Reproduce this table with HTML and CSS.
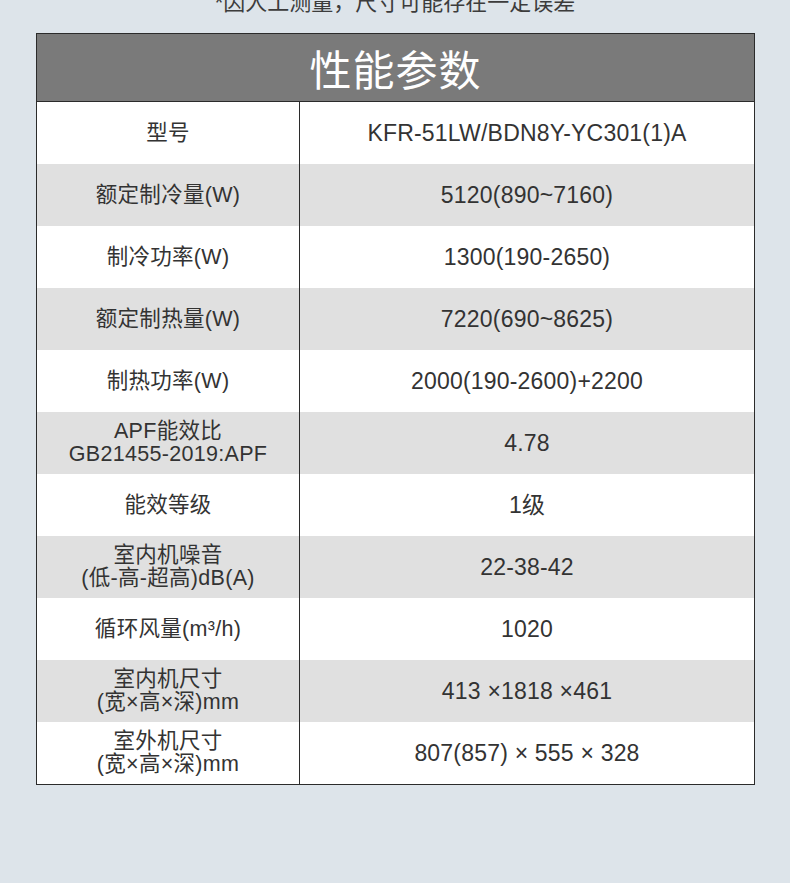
FILE: index.html
```html
<!DOCTYPE html>
<html lang="zh-CN">
<head>
<meta charset="utf-8">
<title>性能参数</title>
<link rel="stylesheet" href="styles.css">
</head>
<body>
<div class="page">
  <p class="note">*因人工测量，尺寸可能存在一定误差</p>
  <div class="spec">
    <div class="spec-title">性能参数</div>
    <div class="row">
      <div class="key">型号</div>
      <div class="val">KFR-51LW/BDN8Y-YC301(1)A</div>
    </div>
    <div class="row alt">
      <div class="key">额定制冷量(W)</div>
      <div class="val">5120(890~7160)</div>
    </div>
    <div class="row">
      <div class="key">制冷功率(W)</div>
      <div class="val">1300(190-2650)</div>
    </div>
    <div class="row alt">
      <div class="key">额定制热量(W)</div>
      <div class="val">7220(690~8625)</div>
    </div>
    <div class="row">
      <div class="key">制热功率(W)</div>
      <div class="val">2000(190-2600)+2200</div>
    </div>
    <div class="row alt">
      <div class="key">APF能效比<br>GB21455-2019:APF</div>
      <div class="val">4.78</div>
    </div>
    <div class="row">
      <div class="key">能效等级</div>
      <div class="val">1级</div>
    </div>
    <div class="row alt">
      <div class="key">室内机噪音<br>(低-高-超高)dB(A)</div>
      <div class="val">22-38-42</div>
    </div>
    <div class="row">
      <div class="key">循环风量(m³/h)</div>
      <div class="val">1020</div>
    </div>
    <div class="row alt">
      <div class="key">室内机尺寸<br>(宽×高×深)mm</div>
      <div class="val">413 ×1818 ×461</div>
    </div>
    <div class="row">
      <div class="key">室外机尺寸<br>(宽×高×深)mm</div>
      <div class="val">807(857) × 555 × 328</div>
    </div>
  </div>
</div>
</body>
</html>
```
FILE: styles.css
```css
html, body {
  margin: 0;
  padding: 0;
}

body {
  background: #dde4ea;
  font-family: "Liberation Sans", "Noto Sans CJK SC", sans-serif;
  color: #333333;
}

.page {
  width: 790px;
  height: 883px;
  overflow: hidden;
}

.note {
  margin: -9px 0 0 0;
  padding-bottom: 18px;
  line-height: 24px;
  font-size: 22px;
  text-align: center;
  color: #3c3c3c;
}

.spec {
  margin-left: 36px;
  width: 719px;
  box-sizing: border-box;
  border: 1px solid #2b2b2b;
}

.spec-title {
  height: 67px;
  border-bottom: 1px solid #2b2b2b;
  background: #7a7a7a;
  color: #ffffff;
  font-family: "Noto Sans CJK SC", sans-serif;
  font-size: 42px;
  letter-spacing: 1px;
  display: flex;
  align-items: center;
  justify-content: center;
}

.row {
  display: grid;
  grid-template-columns: 263px 1fr;
  height: 62px;
  background: #ffffff;
}

.row.alt {
  background: #e0e0e0;
}

.key,
.val {
  display: flex;
  align-items: center;
  justify-content: center;
  text-align: center;
  line-height: 23px;
}

.key {
  border-right: 1px solid #2b2b2b;
  font-size: 21.5px;
  letter-spacing: 0.3px;
}

.val {
  font-size: 23px;
  letter-spacing: 0.2px;
}
```
